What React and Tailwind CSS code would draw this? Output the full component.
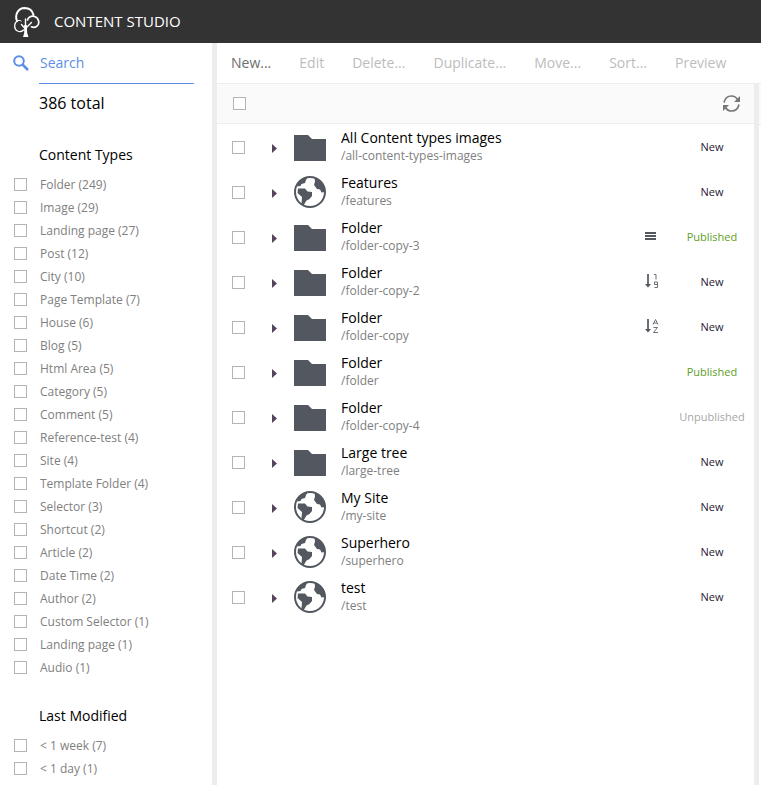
import React from "react";

const contentTypes = [
  "Folder (249)", "Image (29)", "Landing page (27)", "Post (12)", "City (10)", "Page Template (7)",
  "House (6)", "Blog (5)", "Html Area (5)", "Category (5)", "Comment (5)", "Reference-test (4)",
  "Site (4)", "Template Folder (4)", "Selector (3)", "Shortcut (2)", "Article (2)", "Date Time (2)",
  "Author (2)", "Custom Selector (1)", "Landing page (1)", "Audio (1)",
];
const lastModified = ["< 1 week (7)", "< 1 day (1)"];
const actions = ["New...", "Edit", "Delete...", "Duplicate...", "Move...", "Sort...", "Preview"];
const rows = [
  { name: "All Content types images", path: "/all-content-types-images", status: "New" },
  { name: "Features", path: "/features", status: "New", site: true },
  { name: "Folder", path: "/folder-copy-3", status: "Published", sort: "manual" },
  { name: "Folder", path: "/folder-copy-2", status: "New", sort: "numeric" },
  { name: "Folder", path: "/folder-copy", status: "New", sort: "alpha" },
  { name: "Folder", path: "/folder", status: "Published" },
  { name: "Folder", path: "/folder-copy-4", status: "Unpublished" },
  { name: "Large tree", path: "/large-tree", status: "New" },
  { name: "My Site", path: "/my-site", status: "New", site: true },
  { name: "Superhero", path: "/superhero", status: "New", site: true },
  { name: "test", path: "/test", status: "New", site: true },
];
const statusColors = {
  New: "text-[#1f2033]",
  Published: "text-[#609e24]",
  Unpublished: "text-[#a6a6a6]",
};

const boxClass = "block size-[13px] shrink-0 appearance-none border border-[#b4b4b4] bg-white checked:bg-[#5c8ee6]";

function Logo() {
  return (
    <svg className="h-[30px] w-[26px] shrink-0" viewBox="0 0 26 30" fill="none" stroke="#fff" strokeLinecap="round" aria-hidden="true">
      <path d="M3 14C0.500 8 4 1.200 10.500 1c4.500 0 8 2.500 9 7" strokeWidth="2" />
      <path d="M3 14c-3.200 2.500-3.200 8 .5 10 2 1 4.500.5 6-1" strokeWidth="1.300" />
      <path d="M3 14c1.300-.8 3-.8 4.200 0" strokeWidth="1" />
      <path d="M13.500 13c.8-3 4-4.500 7-3.500 5 1.700 5.500 8 2 10-1.500 1-3.500 1-5 .3" strokeWidth="1.700" />
      <path d="M11.500 24V12M11.500 22L7.500 17.500M12.500 20.500l5-5" strokeWidth="1.400" />
      <path d="M10.200 18h2.600l.4 8 1.300 4H9l1.200-4z" fill="#fff" stroke="none" />
    </svg>
  );
}

function FolderIcon() {
  return (
    <svg className="h-[26px] w-8" viewBox="0 0 32 26" fill="#53575f" aria-hidden="true">
      <path d="M0 0h14l4 4h14v22H0z" />
    </svg>
  );
}

function GlobeIcon() {
  return (
    <svg className="mb-0.5 block size-8" viewBox="0 0 32 32" aria-hidden="true">
      <circle cx="16" cy="16" r="15" fill="#fff" stroke="#53575f" strokeWidth="2" />
      <path d="M4 7C7 3 10 1.500 14 1L12 4 11 7 7.500 8 6.500 10 3 10.500z" fill="#53575f" />
      <path d="M4 12.500h7l2.500 3 4.500.5v4l-2.500 3-3 1.500-3 5-2-2 .5-6.500-4.500-4z" fill="#53575f" />
      <path d="M20.500 1.500C27 4 31 9 31 16l-3.500.5-1.500-3-3-.5-3-4 1-3.500z" fill="#53575f" />
    </svg>
  );
}

function SortIcon({ kind }) {
  if (kind === "manual") {
    return (
      <svg className="mb-0.5 ml-[5px] h-[9px] w-[11px]" viewBox="0 0 11 9" fill="#53575f" aria-hidden="true">
        <path d="M0 0h11v2H0zM0 3h11v2H0zM0 6h11v2H0z" />
      </svg>
    );
  }
  return (
    <svg className="mb-1 ml-[5px] h-4 w-[14px]" viewBox="0 0 14 16" fill="none" stroke="#6b6f78" aria-hidden="true">
      <path d="M3 1v12" strokeWidth="2" />
      <path d="M0 11h6l-3 3.500z" fill="#53575f" stroke="none" />
      {kind === "numeric" ? (
        <path d="M9 1.500h2v5M12.500 11.500h-3v-2.500h3v5.500h-3" />
      ) : (
        <path d="M8 6.500l2.500-5 2.500 5M9 5h3M8.500 9.500h4l-4 5h4.500" />
      )}
    </svg>
  );
}

function FilterGroup({ title, items }) {
  return (
    <fieldset>
      <legend className="pl-[39px] text-sm leading-5 text-black">{title}</legend>
      <div className="pt-2">
        {items.map((item) => (
          <label key={item} className="flex h-[23px] items-center gap-[13px] pl-[14px] text-xs text-[#808080]">
            <input type="checkbox" className={boxClass} />
            {item}
          </label>
        ))}
      </div>
    </fieldset>
  );
}

export default function App() {
  return (
    <div className="flex min-h-screen flex-col bg-white font-['Open_Sans',sans-serif]">
      <header className="flex h-[43px] items-center gap-[14px] bg-[#333] pl-[14px] text-white">
        <Logo />
        <h1 className="pb-0.5 text-[15px] leading-5">CONTENT STUDIO</h1>
      </header>

      <div className="flex flex-1">
        <aside className="w-[212px] shrink-0">
          <div className="flex h-[41px] pl-[13px]">
            <label htmlFor="search" className="w-[26px] pt-3">
              <svg className="size-4" viewBox="0 0 16 16" fill="none" stroke="#5c8ee6" aria-label="Search">
                <circle cx="6" cy="6" r="4.800" strokeWidth="2" />
                <path d="M9.500 9.500l5.500 5.500" strokeWidth="2.500" />
              </svg>
            </label>
            <input
              id="search"
              type="text"
              placeholder="Search"
              className="w-[155px] border-b border-[#5c8ee6] pl-px text-sm text-[#5c8ee6] outline-none placeholder:text-[#5c8ee6]"
            />
          </div>
          <p className="pt-[7px] pl-[39px] text-base leading-6 text-black">386 total</p>
          <div className="flex flex-col gap-[27px] pt-[30px] pb-1">
            <FilterGroup title="Content Types" items={contentTypes} />
            <FilterGroup title="Last Modified" items={lastModified} />
          </div>
        </aside>

        <div className="w-[5px] shrink-0 bg-[#ededed]" />

        <div className="flex min-w-0 flex-1 flex-col">
          <nav className="flex h-[41px] items-center border-b border-[#ededed]">
            {actions.map((action, i) => (
              <button
                key={action}
                disabled={i > 0}
                className="px-[14px] text-sm whitespace-nowrap text-[#6e6e6e] disabled:text-[#bcbcbc]"
              >
                {action}
              </button>
            ))}
          </nav>

          <div className="flex flex-1">
            <main className="min-w-0 flex-1">
              <div className="flex h-10 items-center justify-between border-b border-[#ededed] bg-[#fafafa] pr-[14px] pl-4">
                <input type="checkbox" aria-label="Select all" className={boxClass} />
                <button aria-label="Refresh">
                  <svg className="size-[17px]" viewBox="0 0 17 17" fill="none" stroke="#787878" strokeWidth="1.700" aria-hidden="true">
                    <path d="M1 7.500C2 3 5 1 8.500 1c2.500 0 4.500 1 6 3.500M16 9.500C15 14 12 16 8.500 16c-2.500 0-4.500-1-6-3.500" />
                    <path d="M17 1v6h-6zM0 16v-6h6z" fill="#787878" stroke="none" />
                  </svg>
                </button>
              </div>

              <ul>
                {rows.map((row) => (
                  <li key={row.path} className="flex h-[45px] items-center pt-0.5 pl-[15px]">
                    <input type="checkbox" aria-label={row.name} className={boxClass} />
                    <button aria-label="Expand" className="flex w-[49px] shrink-0 pt-px pl-[27px]">
                      <svg className="h-[9px] w-[5px]" viewBox="0 0 5 9" fill="#54445c" aria-hidden="true">
                        <path d="M0 0l5 4.500-5 4.500z" />
                      </svg>
                    </button>
                    <div className="w-8 shrink-0">{row.site ? <GlobeIcon /> : <FolderIcon />}</div>
                    <div className="min-w-0 flex-1 pb-0.5 pl-[15px]">
                      <p className="truncate text-sm leading-[18px] text-black">{row.name}</p>
                      <p className="truncate text-xs leading-[18px] text-[#808080]">{row.path}</p>
                    </div>
                    <div className="w-[30px] shrink-0">{row.sort && <SortIcon kind={row.sort} />}</div>
                    <p className={`w-[84px] shrink-0 text-center text-[11px] ${statusColors[row.status]}`}>{row.status}</p>
                  </li>
                ))}
              </ul>
            </main>
            <div className="w-[5px] shrink-0 bg-[#ededed]" />
            <div className="w-[2px] shrink-0">
              <div className="h-[41px] border-b border-[#ededed] bg-[#fafafa]" />
            </div>
          </div>
        </div>
      </div>
    </div>
  );
}
